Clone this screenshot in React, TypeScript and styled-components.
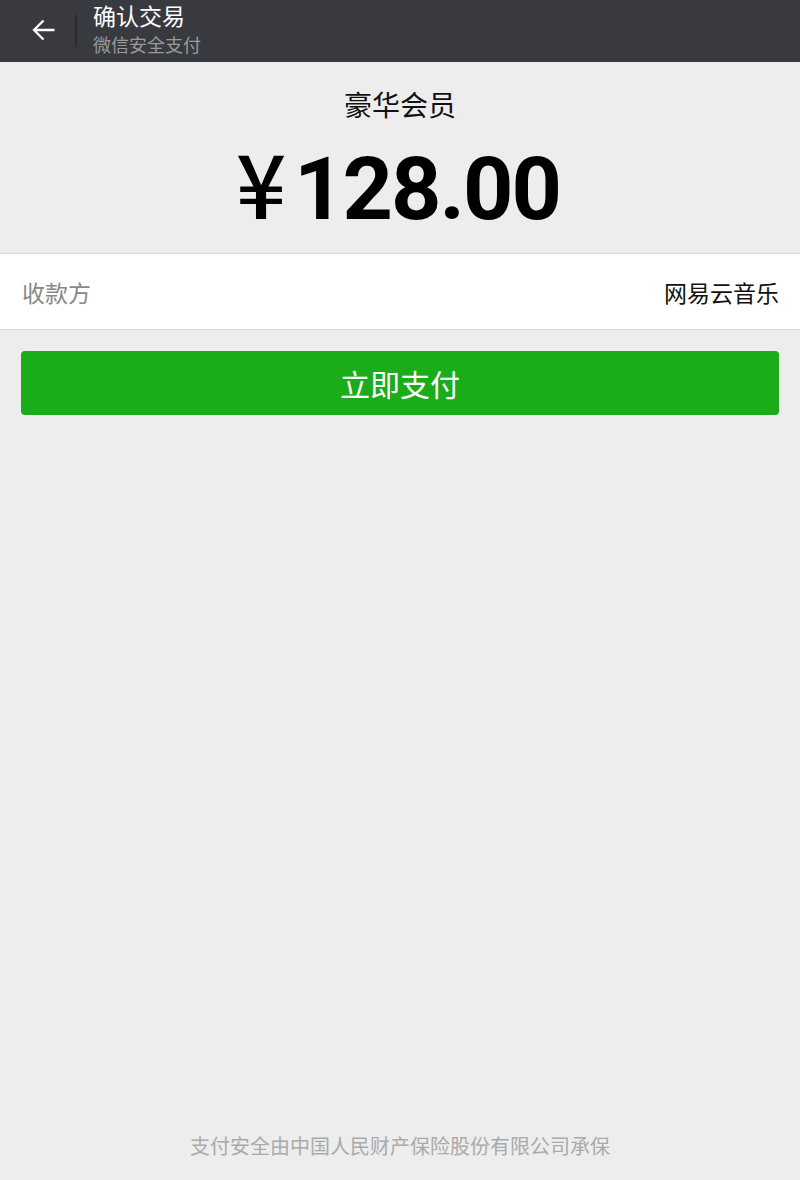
import React from 'react'
import styled, { createGlobalStyle } from 'styled-components'

const GlobalStyle = createGlobalStyle`
  html, body {
    margin: 0;
    padding: 0;
    background: #ededed;
  }
  body {
    font-family: Roboto, "Noto Sans CJK SC", sans-serif;
  }
`

const Page = styled.div`
  display: flex;
  flex-direction: column;
  min-height: 1180px;
  background: #ededed;
`

const Header = styled.div`
  height: 62px;
  background: #393a3f;
  display: flex;
  align-items: center;
`

const BackButton = styled.div`
  width: 75px;
  height: 100%;
  display: flex;
  align-items: center;
  justify-content: center;
  padding-left: 12px;
  padding-bottom: 2px;
  box-sizing: border-box;
`

const Divider = styled.div`
  width: 2px;
  height: 32px;
  background: #2a2b2f;
  margin-right: 16px;
`

const TitleBlock = styled.div`
  display: flex;
  flex-direction: column;
  height: 62px;
  box-sizing: border-box;
`

const Title = styled.div`
  font-family: "Noto Sans CJK SC", sans-serif;
  font-size: 23px;
  line-height: 30px;
  height: 30px;
  color: #ffffff;
`

const SubTitle = styled.div`
  font-family: "Noto Sans CJK SC", sans-serif;
  font-size: 18px;
  line-height: 28px;
  height: 28px;
  color: #9a9a9c;
`

const Summary = styled.div`
  display: flex;
  flex-direction: column;
  align-items: center;
  padding-top: 22px;
  height: 191px;
  box-sizing: border-box;
`

const ProductName = styled.div`
  font-family: "Noto Sans CJK SC", sans-serif;
  font-size: 28px;
  line-height: 40px;
  color: #111;
`

const Amount = styled.div`
  font-family: Roboto, "Noto Sans CJK SC", sans-serif;
  font-weight: 700;
  font-size: 88px;
  line-height: 100px;
  letter-spacing: -2px;
  color: #000;
  margin-top: 7px;
  margin-right: 4px;
  display: flex;
  align-items: baseline;
`

const Currency = styled.span`
  font-family: "Noto Sans CJK SC", sans-serif;
  font-weight: 500;
  margin-right: 10px;
`

const InfoRow = styled.div`
  display: flex;
  align-items: center;
  justify-content: space-between;
  height: 75px;
  padding: 0 21px 0 22px;
  background: #fff;
  border-top: 1px solid #d8d8d8;
  border-bottom: 1px solid #d8d8d8;
  font-family: "Noto Sans CJK SC", sans-serif;
  font-size: 23px;
`

const InfoLabel = styled.span`
  color: #888;
`

const InfoValue = styled.span`
  color: #111;
`

const PayButton = styled.button`
  margin: 21px 21px 0;
  height: 64px;
  border: none;
  border-radius: 4px;
  background: #1aad19;
  color: #fff;
  font-family: "Noto Sans CJK SC", sans-serif;
  font-size: 30px;
  cursor: pointer;
`

const Footer = styled.div`
  margin-top: auto;
  padding-bottom: 20px;
  text-align: center;
  font-family: "Noto Sans CJK SC", sans-serif;
  font-size: 20px;
  line-height: 28px;
  color: #aaaaaa;
`

const ArrowIcon = () => (
  <svg width="24" height="24" viewBox="0 0 24 24" fill="none">
    <path d="M22.5 12H2.5M11.5 2.5L2 12L11.5 21.5" stroke="#fff" strokeWidth="2.3" strokeLinecap="butt" />
  </svg>
)

const App = () => {
  return (
    <Page>
      <GlobalStyle />
      <Header>
        <BackButton>
          <ArrowIcon />
        </BackButton>
        <Divider />
        <TitleBlock>
          <Title>确认交易</Title>
          <SubTitle>微信安全支付</SubTitle>
        </TitleBlock>
      </Header>
      <Summary>
        <ProductName>豪华会员</ProductName>
        <Amount>
          <Currency>¥</Currency>
          128.00
        </Amount>
      </Summary>
      <InfoRow>
        <InfoLabel>收款方</InfoLabel>
        <InfoValue>网易云音乐</InfoValue>
      </InfoRow>
      <PayButton>立即支付</PayButton>
      <Footer>支付安全由中国人民财产保险股份有限公司承保</Footer>
    </Page>
  )
}

export default App
